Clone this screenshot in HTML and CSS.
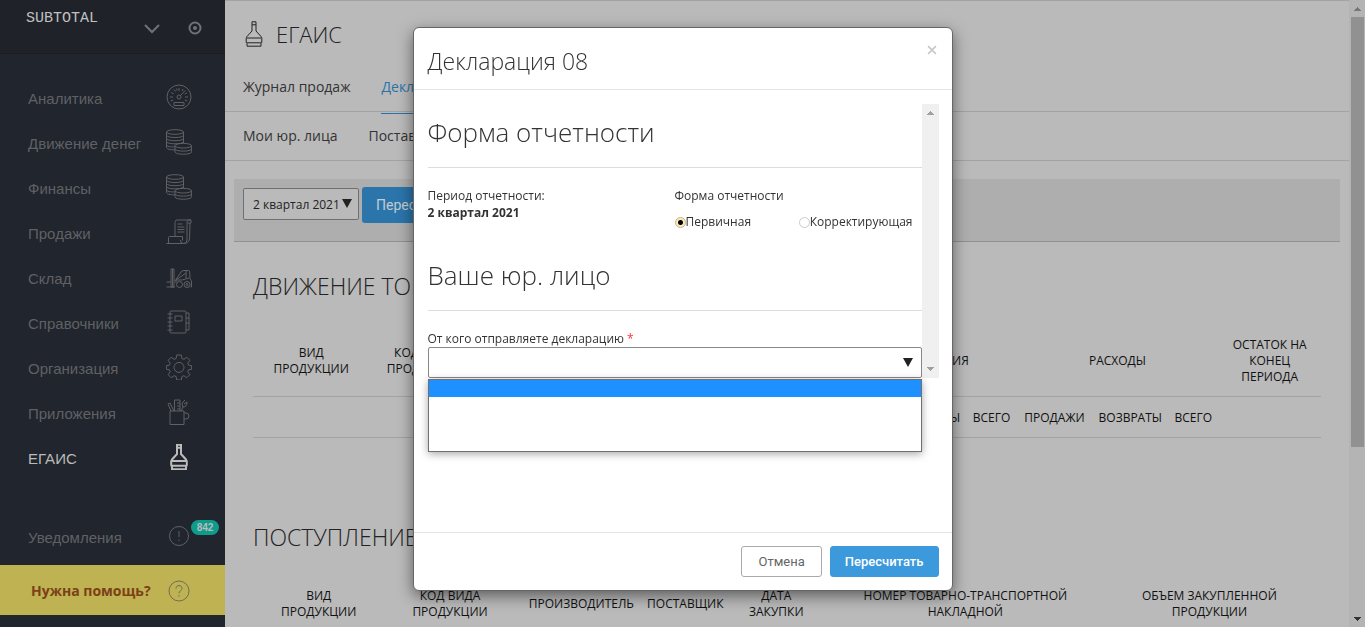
FILE: index.html
```html
<!DOCTYPE html>
<html lang="ru">
<head>
<meta charset="utf-8">
<title>ЕГАИС</title>
<link rel="stylesheet" href="styles.css">
</head>
<body>
<svg class="defs" aria-hidden="true">
  <symbol id="i-bottle" viewBox="0 0 26 26">
    <path d="M11 .8h4v3h-4zM11 3.800v6.200L6 15.500q-.8 1-.8 2v3.500q0 1 .8 1.500v2.700h14v-2.700q.8-.5.800-1.500v-3.500q0-1-.8-2L15 10V3.800M5.500 17h15M6 21.800h14"/>
  </symbol>
  <symbol id="i-coins" viewBox="0 0 26 26">
    <ellipse cx="9" cy="3" rx="8.500" ry="2.300"/>
    <path d="M.5 3v15.500c0 1.400 3.500 2.400 8.500 2.400M17.500 3v11M.5 6.200c0 3.100 17 3.100 17 0M.5 9.400c0 3.100 17 3.100 17 0M.5 12.500c0 3.100 17 3.100 17 0M.5 15.600c0 2 4 2.500 8.500 2.300"/>
    <ellipse cx="17.300" cy="16.700" rx="8.300" ry="2.300"/>
    <path d="M9 16.700v6.200c0 3.100 16.600 3.100 16.600 0v-6.200M9 19.800c0 3.100 16.600 3.100 16.600 0"/>
  </symbol>
</svg>
<div class="app">
  <aside class="sidebar">
    <div class="brand">
      <span class="brand-name">SUBTOTAL</span>
      <button class="plain" aria-label="Меню магазина"><svg class="ic-chevron" viewBox="0 0 18 11"><path d="M2 2l7 7 7-7"/></svg></button>
      <button class="plain" aria-label="Настройки"><svg class="ic-target" viewBox="0 0 14 14"><circle cx="7" cy="7" r="5.500"/><circle class="dot" cx="7" cy="7" r="2"/></svg></button>
    </div>
    <nav class="menu">
      <a href="#">Аналитика <svg class="ic" viewBox="0 0 26 26"><circle cx="13" cy="13" r="12"/><path d="M8 18.500h10v3H8zM14.300 11.700l5-5.200M4 13h3M19 13h3M5.200 8.500l2.500 1.300M8 5.500l1.500 2M13 4v3M17 5l-.8 2M4.700 17l2.500-1M21.300 17l-2.500-1M10.500 4.500l.7 2M20.800 9l-2 1"/><circle cx="13" cy="13" r="2"/></svg></a>
      <a href="#">Движение денег <svg class="ic"><use href="#i-coins"/></svg></a>
      <a href="#">Финансы <svg class="ic"><use href="#i-coins"/></svg></a>
      <a href="#">Продажи <svg class="ic" viewBox="0 0 26 26"><path d="M9 17V3.500Q9 1 11 1h14v3h-3.500M25 1h-3q-1 1-1 3v16q0 4.500-3.500 4.500T14.500 21M24 4L23.500 20q-1 4.500-6 4.500H.5M2.500 24V18.500q0-1 1-1h13v4M11.500 5h5M11.500 8h7M11.500 10.500h7M11.500 13h7"/></svg></a>
      <a href="#">Склад <svg class="ic" viewBox="0 0 26 26"><path d="M5 23V5h3v18zM6.500 5v18M.5 23H9M.5 18H5M9 17L15 8q1-1.500 3-1.500h4.500q1 0 1.200 1.500L24 15q1.500 1 1.500 3v5h-1M10 19V16l10-7M10 16h6l7-2M20 7v7"/><circle cx="13.500" cy="20.500" r="3"/><circle cx="21" cy="20.500" r="3"/><circle cx="21" cy="20.500" r="1"/></svg></a>
      <a href="#">Справочники <svg class="ic" viewBox="0 0 26 26"><rect x="4" y="2" width="16" height="22" rx="1"/><path d="M1.500 5h5M1.500 9h5M1.500 13h5M1.500 17h5M1.500 21h5M9 7h7v5H9zM20 4h3v17h-3M20 9h3.500M20 14h3.500"/></svg></a>
      <a href="#">Организация <svg class="ic" viewBox="0 0 26 26"><path d="M10.700 1h4.600l.6 3.500 2 .8 2.900-2 3 3-2 2.900.8 2 3 .5v3.600l-3 .5-.8 2 2 2.900-3 3-2.900-2-2 .8-.6 3.500h-4.600l-.6-3.500-2-.8-2.900 2-3-3 2-2.900-.8-2-3-.5v-3.600l3-.5.8-2-2-2.900 3-3 2.900 2 2-.8z"/><circle cx="13" cy="13.400" r="5"/></svg></a>
      <a href="#">Приложения <svg class="ic" viewBox="0 0 26 26"><path d="M4 12h14v13.500H4zM18 14h2q3 0 3 3t-3 3h-2M5 12L2 5l2-1 4 8M8.500 12V1H14v11M11 4h3M11 7h3M11 10h3M15 12l2-4q-2-3 0-5l2-2M17 8q4 0 4-5l-3 2"/></svg></a>
      <a href="#" class="active">ЕГАИС <svg class="ic"><use href="#i-bottle"/></svg></a>
    </nav>
    <a href="#" class="notice">Уведомления
      <span class="notice-icon"><svg class="ic-round" viewBox="0 0 22 22"><circle cx="11" cy="11" r="9.500"/><path d="M11 6v6M11 14.500v1.500"/></svg><span class="badge">842</span></span>
    </a>
    <a href="#" class="help">Нужна помощь? <svg class="ic-round" viewBox="0 0 22 22"><circle cx="11" cy="11" r="10"/><path d="M8 8.500c0-4 6-4 6 0 0 2-3 2.300-3 5M11 15.200v1.500"/></svg></a>
  </aside>

  <main class="main">
    <h1 class="page-title"><svg class="ic-title"><use href="#i-bottle"/></svg>ЕГАИС</h1>
    <nav class="tabs tabs-top"><a href="#">Журнал продаж</a><a href="#" class="current">Декларации</a></nav>
    <nav class="tabs tabs-sub"><a href="#">Мои юр. лица</a><a href="#">Поставщики</a></nav>
    <div class="content">
      <form class="filter">
        <span class="select-wrap">
          <select class="select" aria-label="Период"><option>2 квартал 2021</option></select>
          <svg class="arrow" viewBox="0 0 10 9"><path d="M0 0h10L5 9z"/></svg>
        </span>
        <button type="button" class="btn-filter">Пересчитать</button>
      </form>
      <section class="block">
        <h2>ДВИЖЕНИЕ ТОВАРОВ</h2>
        <table class="grid moves">
          <colgroup><col class="m1"><col class="m2"><col class="m3"><col class="m4"><col class="m4"><col class="m6"><col class="m7"><col class="m8"><col class="m7"><col class="m7"><col class="m8"><col class="m9"></colgroup>
          <tr><th>ВИД<br>ПРОДУКЦИИ</th><th>КОД ВИДА<br>ПРОДУКЦИИ</th><th></th><th></th><th></th><th colspan="3">ПОСТУПЛЕНИЯ</th><th colspan="3">РАСХОДЫ</th><th>ОСТАТОК НА<br>КОНЕЦ<br>ПЕРИОДА</th></tr>
          <tr><th></th><th></th><th></th><th></th><th></th><th></th><th>ВОЗВРАТЫ</th><th>ВСЕГО</th><th>ПРОДАЖИ</th><th>ВОЗВРАТЫ</th><th>ВСЕГО</th><th></th></tr>
        </table>
      </section>
      <section class="block">
        <h2>ПОСТУПЛЕНИЕ</h2>
        <table class="grid supply">
          <colgroup><col class="s1"><col class="s1"><col class="s1"><col class="s2"><col class="s3"><col class="s4"><col class="s5"></colgroup>
          <tr><th>ВИД<br>ПРОДУКЦИИ</th><th>КОД ВИДА<br>ПРОДУКЦИИ</th><th>ПРОИЗВОДИТЕЛЬ</th><th>ПОСТАВЩИК</th><th>ДАТА<br>ЗАКУПКИ</th><th>НОМЕР ТОВАРНО-ТРАНСПОРТНОЙ<br>НАКЛАДНОЙ</th><th>ОБЪЕМ ЗАКУПЛЕННОЙ<br>ПРОДУКЦИИ</th></tr>
        </table>
      </section>
    </div>
  </main>
  <div class="page-scroll" aria-hidden="true">
    <svg viewBox="0 0 7 4"><path d="M3 0h1v1h1v1h1v1h1v1H0V3h1V2h1V1h1z"/></svg>
    <div class="thumb"></div>
    <svg class="dark" viewBox="0 0 7 4"><path d="M0 0h7v1H6v1H5v1H4v1H3V3H2V2H1V1H0z"/></svg>
  </div>
</div>

<div class="overlay">
  <section class="modal" role="dialog" aria-labelledby="dlg-title">
    <header class="modal-head">
      <h2 id="dlg-title">Декларация 08</h2>
      <button class="plain close" aria-label="Закрыть"><svg viewBox="0 0 9 9"><path d="M1 1l7 7M8 1L1 8"/></svg></button>
    </header>
    <div class="modal-body">
      <div class="scroll-area">
        <form class="form">
          <h3>Форма отчетности</h3>
          <div class="cols">
            <div><p>Период отчетности:</p><p><b>2 квартал 2021</b></p></div>
            <div role="radiogroup" aria-labelledby="kind">
              <p id="kind">Форма отчетности</p>
              <div class="radios">
                <label><input type="radio" name="kind" checked>Первичная</label>
                <label><input type="radio" name="kind">Корректирующая</label>
              </div>
            </div>
          </div>
          <h3>Ваше юр. лицо</h3>
          <label class="field-label" for="entity">От кого отправляете декларацию <span class="req">*</span></label>
          <div class="combo">
            <select id="entity" class="select"><option></option></select>
            <svg class="arrow" viewBox="0 0 10 9"><path d="M0 0h10L5 9z"/></svg>
            <div class="options" role="listbox" aria-label="Юр. лицо"><div class="option chosen" role="option" aria-selected="true"></div></div>
          </div>
        </form>
        <div class="inner-scroll" aria-hidden="true">
          <svg viewBox="0 0 7 4"><path d="M3 0h1v1h1v1h1v1h1v1H0V3h1V2h1V1h1z"/></svg>
          <svg viewBox="0 0 7 4"><path d="M0 0h7v1H6v1H5v1H4v1H3V3H2V2H1V1H0z"/></svg>
        </div>
      </div>
    </div>
    <footer class="modal-foot">
      <button class="btn">Отмена</button>
      <button class="btn btn-primary">Пересчитать</button>
    </footer>
  </section>
</div>
</body>
</html>
```
FILE: styles.css
```css
* { box-sizing: border-box; }
body { margin: 0; background: #bababa; color: #222; font: 12px/18px "Open Sans", "Noto Sans", sans-serif; }
h1, h2, h3, p { margin: 0; font-weight: 300; }
a { color: inherit; text-decoration: none; }
svg { fill: none; stroke: currentColor; flex: none; }
.defs { position: absolute; width: 0; height: 0; }
.plain { border: 0; padding: 0; background: none; color: inherit; display: block; }

.app { display: flex; height: 100vh; overflow: hidden; }

/* Sidebar */
.sidebar { width: 225px; flex: none; display: flex; flex-direction: column; background: #21252d; color: #5f6165; font: 15px/20px "Liberation Sans", Arial, sans-serif; padding-bottom: 12px; }
.brand { height: 54px; flex: none; display: flex; align-items: flex-start; background: #1f2229; border-bottom: 1px solid #1a1d23; padding: 9px 23px 0 26px; }
.brand-name { font: 15px/20px "Liberation Mono", monospace; color: #c0c0c0; margin-right: auto; }
.brand .plain { margin: 12px 0 0 27px; height: 14px; display: flex; align-items: center; }
.ic-chevron { width: 18px; height: 11px; stroke-width: 2; display: block; color: #707275; }
.ic-target { width: 14px; height: 14px; stroke-width: 2; display: block; color: #707275; }
.dot { fill: currentColor; stroke: none; }
.menu { padding-top: 22px; }
.menu a { display: flex; align-items: center; justify-content: space-between; height: 45px; padding: 0 33px 0 28px; }
.ic { width: 26px; height: 26px; margin-bottom: 4px; }
.menu .active { color: #bbb; }
.active .ic { stroke-width: 2; }
.notice { margin-top: auto; height: 54px; display: flex; align-items: center; justify-content: space-between; padding: 0 35px 0 28px; }
.notice-icon { position: relative; margin-bottom: 4px; }
.ic-round { width: 22px; height: 22px; display: block; }
.badge { position: absolute; left: 23px; top: -5px; width: 28px; border-radius: 8px; background: #0f9c8c; color: #bbb; font: bold 10px/15px "Liberation Sans", sans-serif; text-align: center; }
.help { height: 50px; display: flex; align-items: center; justify-content: space-between; padding: 2px 35px 0 31px; background: #bfb252; color: #7b4017; font: bold 14px/20px "Open Sans", sans-serif; }
.help svg { color: #6f6e58; }

/* Page */
.main { flex: 1; min-width: 0; border-top: 1px solid #a3a3a3; overflow: hidden; }
.page-title { display: flex; align-items: center; gap: 9px; padding: 0 16px; height: 66px; font-size: 22px; line-height: 32px; font-weight: 300; }
.ic-title { width: 26px; height: 26px; }
.tabs { display: flex; gap: 31px; padding: 0 18px; border-bottom: 1px solid #a3a3a3; font-size: 14px; color: #333; }
.tabs a { line-height: 20px; }
.tabs-top { height: 45px; padding-top: 10px; }
.tabs-top .current { color: #2a73a9; height: 37px; border-bottom: 1px solid #2a73a9; }
.tabs-sub { height: 49px; padding-top: 14px; }
.content { padding: 18px 9px 0; }
.filter { height: 63px; background: #aeaeae; border-bottom: 1px solid #919191; display: flex; gap: 3px; padding: 8px 9px; align-items: flex-start; }
.select-wrap { position: relative; width: 116px; margin-top: 1px; }
.select { appearance: none; width: 100%; border: 1px solid #707070; border-radius: 2px; background: #bababa; color: #222; font: 12px/16px "Open Sans", sans-serif; padding: 2px 9px 0; height: 32px; display: block; }
.arrow { position: absolute; right: 7px; top: 11px; width: 10px; height: 9px; fill: #222; stroke: none; pointer-events: none; }
.btn-filter { height: 36px; border: 0; border-radius: 3px; background: #2b75ab; color: #c6cbd0; font: 14px/20px Roboto, sans-serif; padding: 0 14px; }
.block { padding: 28px 19px 0; }
.block h2 { font-size: 23px; line-height: 32px; white-space: nowrap; }
.grid { width: 100%; table-layout: fixed; border-collapse: collapse; font-size: 12px; line-height: 16px; color: #111; }
.grid th { font-weight: 400; padding: 13px 0 11px; white-space: nowrap; border-bottom: 1px solid #a3a3a3; height: 41px; }
.moves { margin-top: 22px; }
.supply { margin-top: 21px; }
.supply th { padding: 14px 0 10px; }
.block + .block { padding-top: 83px; }
.m1 { width: 10.9%; } .m2 { width: 10.3%; } .m3 { width: 13%; } .m4 { width: 10%; }
.m6 { width: 5.5%; } .m7 { width: 7.1%; } .m8 { width: 4.7%; } .m9 { width: 9.6%; }
.s1 { width: 12.3%; } .s2 { width: 6.8%; } .s3 { width: 10.6%; } .s4 { width: 24.8%; } .s5 { width: 20.9%; }

.page-scroll { width: 16px; background: #b4b4b4; display: flex; flex-direction: column; align-items: center; padding: 7px 1px 6px 2px; gap: 6px; }
.page-scroll svg, .inner-scroll svg { width: 7px; height: 4px; fill: #777; stroke: none; }
.page-scroll .dark { fill: #333; margin-top: auto; }
.thumb { width: 100%; height: 70%; background: #919191; }

/* Dialog */
.overlay { position: fixed; inset: 0; padding-top: 27px; }
.modal { width: 540px; margin: 0 auto; background: #fff; border: 1px solid #666; border-radius: 6px; box-shadow: 0 5px 15px rgba(0, 0, 0, .5); color: #333; }
.modal-head { display: flex; align-items: flex-start; justify-content: space-between; padding: 17px 15px 12px 14px; border-bottom: 1px solid #e5e5e5; }
.modal-head h2 { font-size: 23px; line-height: 32px; }
.close svg { width: 10px; height: 10px; display: block; stroke: #c8c8c8; stroke-width: 1.500; }
.modal-body { padding: 14px 13px 0 14px; height: 442px; }
.scroll-area { display: flex; }
.form { flex: 1; }
.form h3 { font-size: 26px; line-height: 32px; padding: 12px 0 19px; border-bottom: 1px solid #ddd; }
.cols { display: grid; grid-template-columns: 1fr 1fr; padding-top: 19px; height: 79px; }
.cols p { font-size: 12px; line-height: 17px; font-weight: 400; }
.radios { display: flex; justify-content: space-between; padding: 9px 9px 0 0; white-space: nowrap; }
.radios label { display: flex; align-items: center; line-height: 18px; }
.radios input { appearance: none; width: 11px; height: 11px; margin: 1px 0 0; border: 1px solid #ccc; border-radius: 50%; background: #fff; }
.radios input:checked { border-color: #c9b183; background: radial-gradient(circle, #000 2px, #fbe9c3 3px); }
.field-label { display: block; margin-top: 19px; line-height: 17px; }
.req { color: #f33; }
.combo { position: relative; }
.combo .select { height: 31px; border-color: #888; background: #fff; }
.combo .arrow { right: 9px; }
.options { position: absolute; top: 32px; left: 0; right: 0; height: 73px; border: 1px solid #707070; background: #fff; box-shadow: 0 2px 8px rgba(0, 0, 0, .35); }
.option { height: 17px; }
.chosen { background: #1e90ff; }
.inner-scroll { width: 17px; background: #f0f0f0; display: flex; flex-direction: column; justify-content: space-between; align-items: center; padding: 7px 0; }
.inner-scroll svg { fill: #a0a0a0; }
.modal-foot { border-top: 1px solid #e5e5e5; padding: 13px; display: flex; justify-content: flex-end; gap: 8px; }
.btn { height: 31px; padding: 0 16px; border: 1px solid #aaa; border-radius: 3px; background: #fff; color: #666; font: 13px/18px Roboto, sans-serif; }
.btn-primary { padding: 0 14px; background: #3b99dc; border-color: #3b99dc; color: #fff; font-weight: 500; }
```
